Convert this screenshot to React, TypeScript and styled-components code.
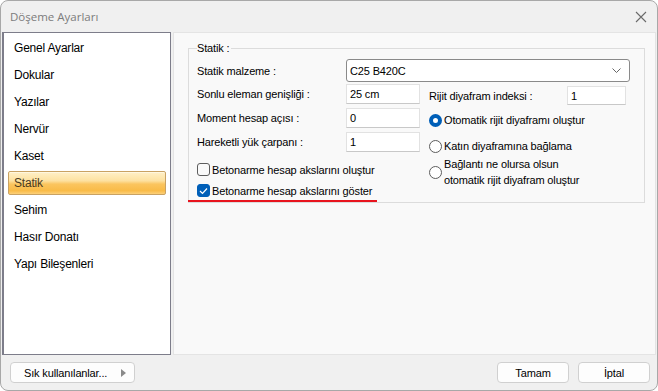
import React from 'react'
import styled, { createGlobalStyle } from 'styled-components'

const GlobalStyle = createGlobalStyle`
  html, body {
    margin: 0;
    padding: 0;
    background: #ffffff;
  }
  body {
    font-family: 'Liberation Sans', Arial, sans-serif;
    font-size: 11px;
    letter-spacing: -0.15px;
    color: #000;
  }
`

const menuItems = [
  'Genel Ayarlar',
  'Dokular',
  'Yazılar',
  'Nervür',
  'Kaset',
  'Statik',
  'Sehim',
  'Hasır Donatı',
  'Yapı Bileşenleri',
]

const App: React.FC = () => {
  return (
    <>
      <GlobalStyle />
      <Window>
        <TitleBar>
          <Title>Döşeme Ayarları</Title>
          <CloseButton>
            <svg width="12" height="12" viewBox="0 0 12 12">
              <path d="M1 1 L11 11 M11 1 L1 11" stroke="#6a6a6a" strokeWidth="1.1" fill="none" />
            </svg>
          </CloseButton>
        </TitleBar>

        <Body>
          <SideList>
            {menuItems.map((item) => (
              <SideItem key={item} $active={item === 'Statik'}>
                {item}
              </SideItem>
            ))}
          </SideList>

          <ContentPanel>
            <GroupBox>
              <Legend>Statik :</Legend>

              <FullRow>
                <Label>Statik malzeme :</Label>
                <Select>
                  <span>C25 B420C</span>
                  <svg width="9" height="5" viewBox="0 0 9 5">
                    <path d="M0.5 0.5 L4.5 4.5 L8.5 0.5" stroke="#666" strokeWidth="1" fill="none" />
                  </svg>
                </Select>
              </FullRow>

              <Columns>
                <LeftCol>
                  <FieldRow>
                    <Label>Sonlu eleman genişliği :</Label>
                    <TextBox $width={74}>25 cm</TextBox>
                  </FieldRow>
                  <FieldRow>
                    <Label>Moment hesap açısı :</Label>
                    <TextBox $width={74}>0</TextBox>
                  </FieldRow>
                  <FieldRow>
                    <Label>Hareketli yük çarpanı :</Label>
                    <TextBox $width={74}>1</TextBox>
                  </FieldRow>

                  <Checks>
                    <CheckRow>
                      <CheckBox $checked={false} />
                      <span>Betonarme hesap akslarını oluştur</span>
                    </CheckRow>
                    <CheckRow>
                      <CheckBox $checked>
                        <svg width="9" height="8" viewBox="0 0 9 8">
                          <path d="M1 4 L3.5 6.5 L8 1.5" stroke="#fff" strokeWidth="1.2" fill="none" />
                        </svg>
                      </CheckBox>
                      <span>Betonarme hesap akslarını göster</span>
                    </CheckRow>
                    <RedLine />
                  </Checks>
                </LeftCol>

                <RightCol>
                  <IndexRow>
                    <RightLabel>Rijit diyafram indeksi :</RightLabel>
                    <TextBox $width={59} $height={19}>1</TextBox>
                  </IndexRow>
                  <RadioList>
                    <RadioRow>
                      <Radio $checked />
                      <span>Otomatik rijit diyaframı oluştur</span>
                    </RadioRow>
                    <RadioRow>
                      <Radio $checked={false} />
                      <span>Katın diyaframına bağlama</span>
                    </RadioRow>
                    <RadioRow>
                      <Radio $checked={false} />
                      <span>
                        Bağlantı ne olursa olsun
                        <br />
                        otomatik rijit diyafram oluştur
                      </span>
                    </RadioRow>
                  </RadioList>
                </RightCol>
              </Columns>
            </GroupBox>
          </ContentPanel>
        </Body>

        <Footer>
          <FavButton>
            <span>Sık kullanılanlar...</span>
            <svg width="5" height="8" viewBox="0 0 5 8">
              <path d="M0 0 L5 4 L0 8 Z" fill="#8a8a8a" />
            </svg>
          </FavButton>
          <Spacer />
          <DialogButton>Tamam</DialogButton>
          <DialogButton>İptal</DialogButton>
        </Footer>
      </Window>
    </>
  )
}

const Window = styled.div`
  box-sizing: border-box;
  width: 658px;
  height: 391px;
  border: 1px solid #a8a8a8;
  border-radius: 8px;
  background: #f0f0f0;
  display: flex;
  flex-direction: column;
  overflow: hidden;
`

const TitleBar = styled.div`
  height: 31px;
  display: flex;
  align-items: center;
  padding: 0 10px 0 9px;
`

const Title = styled.div`
  flex: 1;
  font-family: 'Open Sans', 'Liberation Sans', sans-serif;
  font-size: 11.5px;
  letter-spacing: 0;
  color: #7c7c7c;
`

const CloseButton = styled.div`
  width: 12px;
  height: 12px;
  display: flex;
`

const Body = styled.div`
  height: 323px;
  display: flex;
  padding: 0 1px;
`

const SideList = styled.div`
  box-sizing: border-box;
  width: 169px;
  height: 100%;
  background: #fff;
  border: 1px solid #7d7d8a;
  border-left-width: 2px;
  padding: 3px 4px 0 4px;
`

const SideItem = styled.div<{ $active: boolean }>`
  box-sizing: border-box;
  height: 24px;
  margin-bottom: 3px;
  padding-left: 5px;
  display: flex;
  align-items: center;
  font-size: 12px;
  letter-spacing: -0.2px;
  color: ${(p) => (p.$active ? '#4a3a20' : '#000')};
  border: 1px solid ${(p) => (p.$active ? '#c9a263' : 'transparent')};
  border-radius: 2px;
  background: ${(p) =>
    p.$active
      ? 'linear-gradient(to bottom, #fff0c8 0%, #fde1a0 40%, #fbc55f 55%, #f9bb48 85%, #fcd07a 100%)'
      : 'transparent'};
  box-shadow: ${(p) => (p.$active ? 'inset 0 1px 0 #fff7e0' : 'none')};
`

const ContentPanel = styled.div`
  box-sizing: border-box;
  flex: 1;
  height: 100%;
  margin-left: 2px;
  background: #f9f9f9;
  border: 1px solid #e4e4e4;
  padding: 9px 10px 0 14px;
`

const GroupBox = styled.fieldset`
  box-sizing: border-box;
  margin: 0;
  height: 161px;
  border: 1px solid #dcdcdc;
  border-radius: 0;
  padding: 5px 0 0 8px;
`

const Legend = styled.legend`
  padding: 0 2px 0 0;
  margin-left: 0;
  font-size: 11px;
  line-height: 12px;
`

const FullRow = styled.div`
  display: flex;
  align-items: center;
  height: 23px;
`

const Label = styled.div`
  width: 149px;
  white-space: nowrap;
`

const Select = styled.div`
  box-sizing: border-box;
  width: 284px;
  height: 23px;
  background: #fff;
  border: 1px solid #8a8a8a;
  border-radius: 3px;
  display: flex;
  align-items: center;
  justify-content: space-between;
  padding: 0 8px 0 3px;
`

const Columns = styled.div`
  display: flex;
  margin-top: 2px;
`

const LeftCol = styled.div`
  width: 223px;
  display: flex;
  flex-direction: column;
  gap: 4px;
`

const FieldRow = styled.div`
  display: flex;
  align-items: center;
  height: 20px;
`

const TextBox = styled.div<{ $width: number; $height?: number }>`
  box-sizing: border-box;
  width: ${(p) => p.$width}px;
  height: ${(p) => p.$height ?? 20}px;
  background: #fff;
  border: 1px solid #e2e2e2;
  border-bottom-color: #c8c8c8;
  display: flex;
  align-items: center;
  padding-left: 3px;
`

const Checks = styled.div`
  display: flex;
  flex-direction: column;
  margin-top: 3px;
`

const CheckRow = styled.div`
  display: flex;
  align-items: center;
  height: 21px;
  gap: 2px;
  white-space: nowrap;
`

const CheckBox = styled.div<{ $checked: boolean }>`
  box-sizing: border-box;
  flex: none;
  width: 13px;
  height: 13px;
  border-radius: 3px;
  border: 1px solid ${(p) => (p.$checked ? '#005fb8' : '#5d5d5d')};
  background: ${(p) => (p.$checked ? '#005fb8' : '#fafafa')};
  display: flex;
  align-items: center;
  justify-content: center;
`

const RedLine = styled.div`
  width: 189px;
  height: 2px;
  background: #e8141e;
  margin: -1px 0 0 -9px;
`

const RightCol = styled.div`
  display: flex;
  flex-direction: column;
  padding-left: 9px;
`

const IndexRow = styled.div`
  display: flex;
  align-items: center;
  height: 19px;
  margin-top: 2px;
`

const RightLabel = styled.div`
  width: 138px;
  white-space: nowrap;
`

const RadioList = styled.div`
  display: flex;
  flex-direction: column;
  margin-top: 2px;
`

const RadioRow = styled.div`
  display: flex;
  align-items: center;
  gap: 2px;
  height: 26px;
  line-height: 16px;
  white-space: nowrap;
`

const Radio = styled.div<{ $checked: boolean }>`
  box-sizing: border-box;
  flex: none;
  width: 13px;
  height: 13px;
  border-radius: 50%;
  border: ${(p) => (p.$checked ? '4px solid #005fb8' : '1px solid #5d5d5d')};
  background: #fff;
`

const Footer = styled.div`
  flex: 1;
  display: flex;
  align-items: center;
  padding: 0 7px 0 9px;
  gap: 9px;
`

const Spacer = styled.div`
  flex: 1;
`

const FavButton = styled.div`
  box-sizing: border-box;
  width: 125px;
  height: 21px;
  background: #fdfdfd;
  border: 1px solid #d0d0d0;
  border-radius: 4px;
  display: flex;
  align-items: center;
  justify-content: space-between;
  padding: 0 8px 0 13px;
`

const DialogButton = styled.div`
  box-sizing: border-box;
  width: 72px;
  height: 21px;
  background: #fdfdfd;
  border: 1px solid #d0d0d0;
  border-radius: 4px;
  display: flex;
  align-items: center;
  justify-content: center;
`

export default App
